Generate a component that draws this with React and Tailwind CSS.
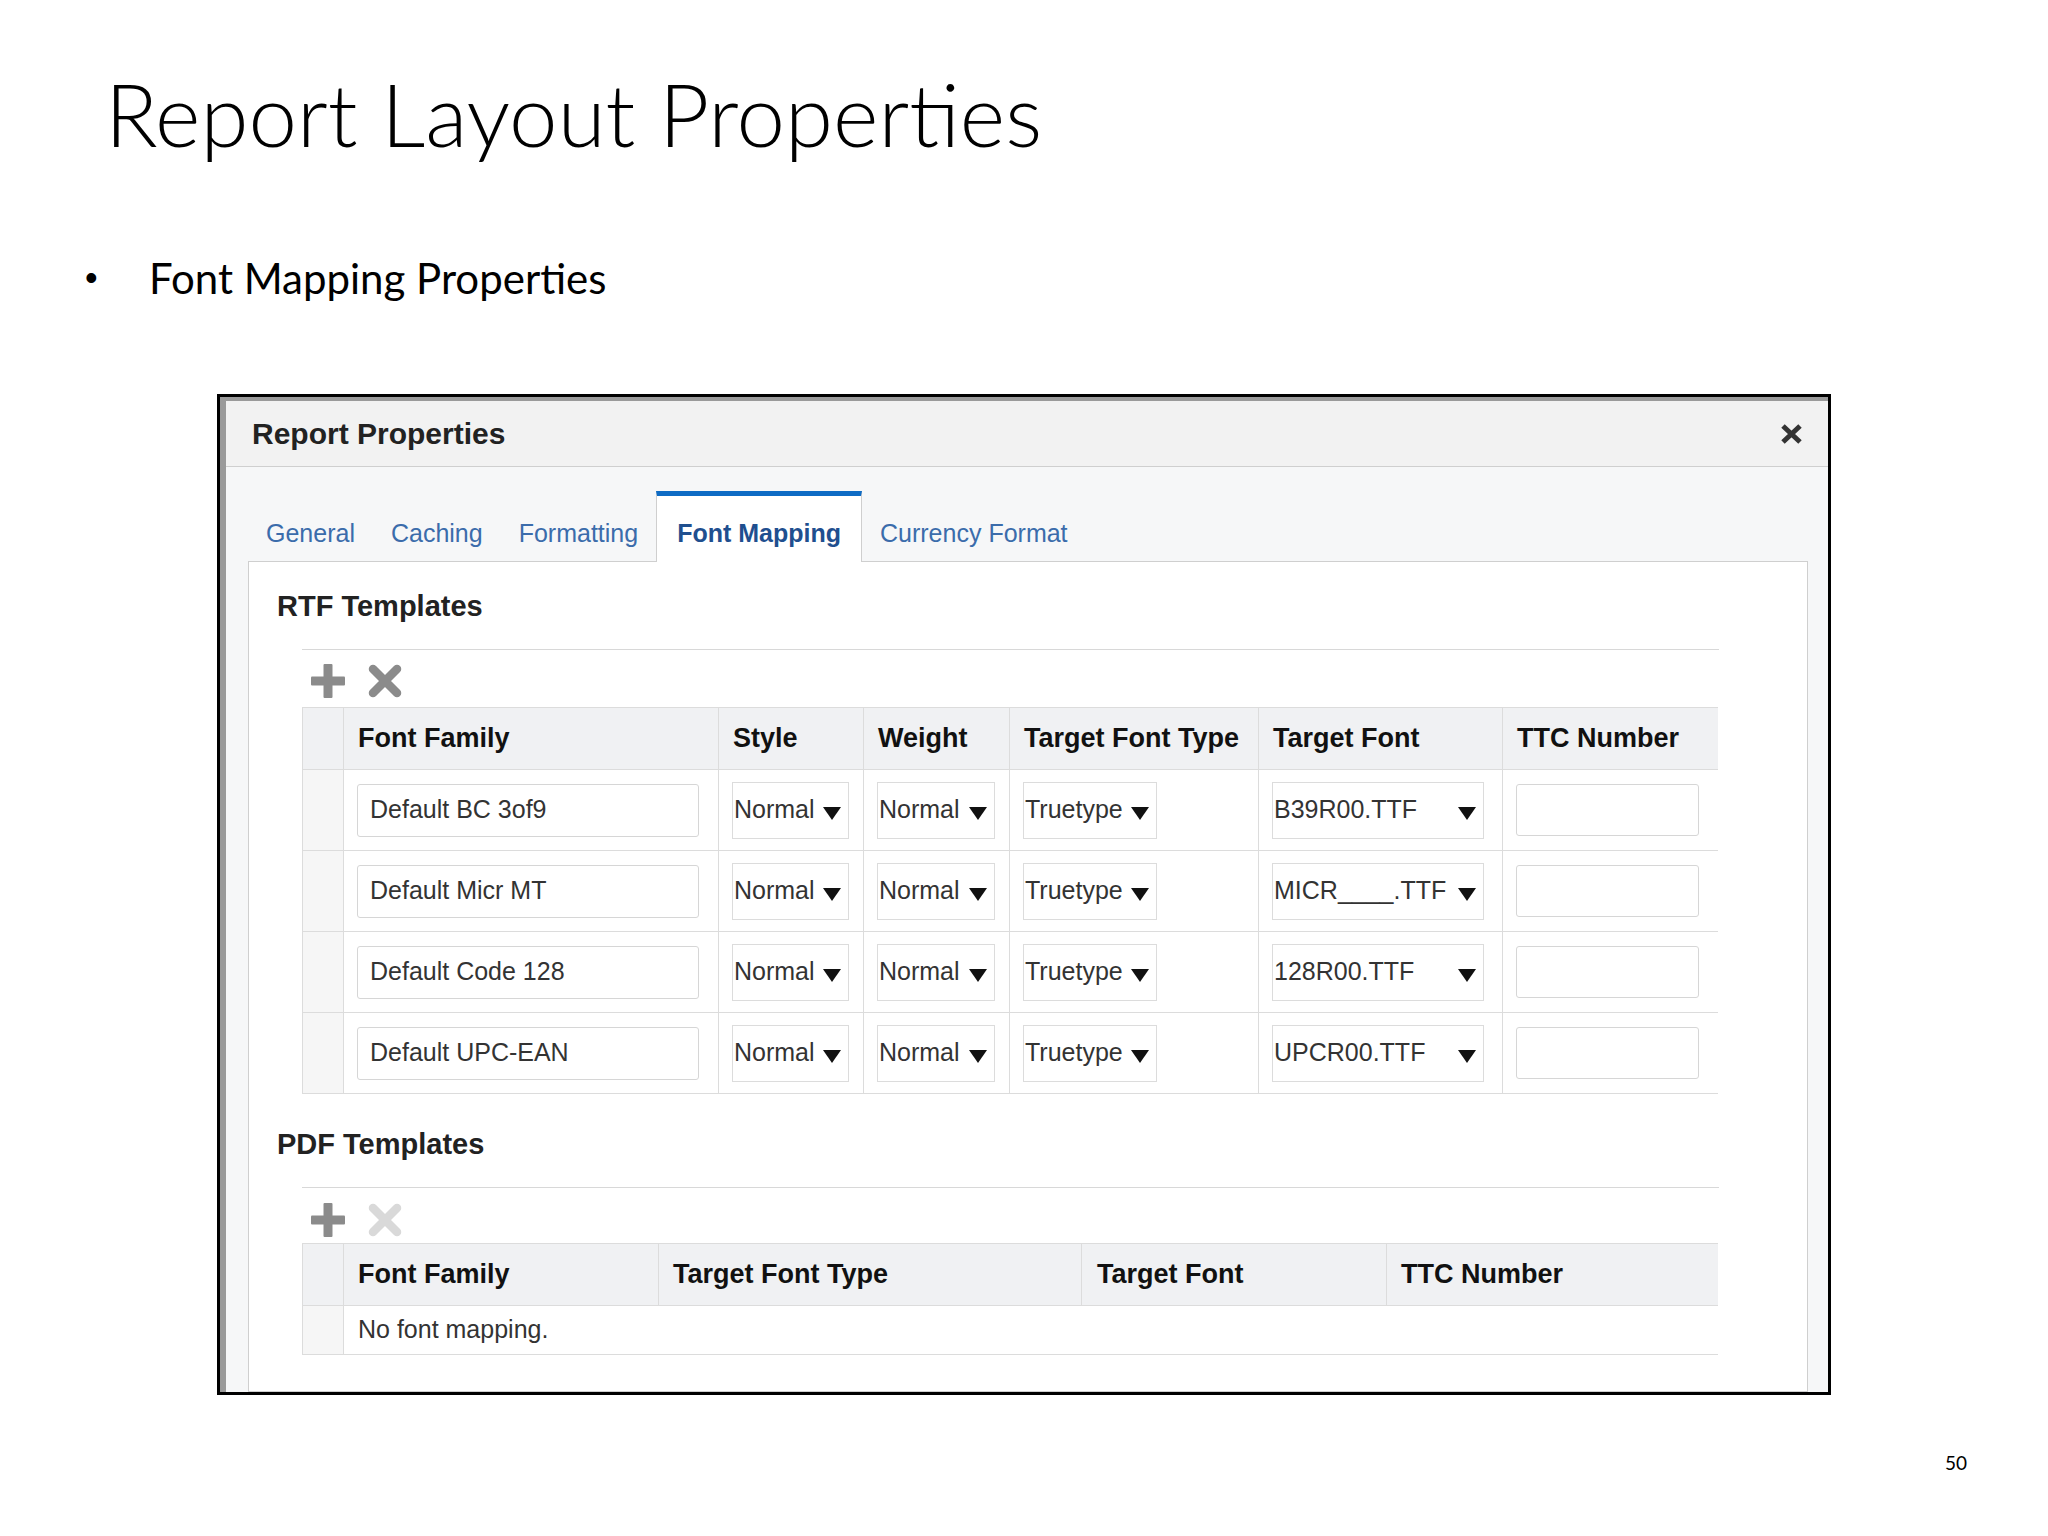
import React from 'react';

const rtfRows = [
  { family: 'Default BC 3of9', font: 'B39R00.TTF' },
  { family: 'Default Micr MT', font: 'MICR____.TTF' },
  { family: 'Default Code 128', font: '128R00.TTF' },
  { family: 'Default UPC-EAN', font: 'UPCR00.TTF' },
];

const Caret = () => (
  <svg width="18" height="13" viewBox="0 0 18 13" className="shrink-0 translate-y-[3px]">
    <path d="M0 0H18L9 13Z" fill="#111" />
  </svg>
);

const PlusIcon = () => (
  <svg width="34" height="34" viewBox="0 0 34 34">
    <rect x="12.5" y="0" width="9" height="34" rx="1" fill="#8b8b8b" />
    <rect x="0" y="12.5" width="34" height="9" rx="1" fill="#8b8b8b" />
  </svg>
);

const CrossIcon = ({ color }) => (
  <svg width="34" height="34" viewBox="0 0 34 34">
    <path d="M5 5L29 29M29 5L5 29" stroke={color} strokeWidth="8.5" strokeLinecap="round" />
  </svg>
);

const Select = ({ value, width }) => (
  <div className={`flex h-[57px] items-center justify-between border border-[#dcdcdc] bg-white pl-[1px] pr-[7px] ${width}`}>
    <span className="whitespace-nowrap">{value}</span>
    <Caret />
  </div>
);

const Tab = ({ label, active }) =>
  active ? (
    <div className="relative -mb-px border-x border-t-[5px] border-x-[#cfcfcf] border-t-[#0e6bc4] bg-white px-[20px] pb-[16px] pt-[25px] text-[25px] font-bold leading-none text-[#1f4f8f]">
      {label}
    </div>
  ) : (
    <div className="border-t-[5px] border-transparent px-[18px] pb-[15px] pt-[25px] text-[25px] leading-none text-[#3b6cab]">
      {label}
    </div>
  );

const headCell = 'flex h-[62px] items-center border-b border-r border-[#dcdcdc] bg-[#f0f1f3] pl-[14px] text-[27px] font-bold text-[#111]';
const rowCell = 'flex h-[81px] items-center border-b border-r border-[#dcdcdc] pl-[13px]';

export default function App() {
  return (
    <div className="relative h-[1536px] w-[2048px] overflow-hidden bg-white font-['Lato',sans-serif] text-black">
      {/* slide title */}
      <div className="pl-[105px] pt-[70px] text-[87px] font-light leading-none">Report Layout Properties</div>

      <div className="mt-[100px] flex items-center pl-[85px] text-[42px] leading-none">
        <span className="w-[64px] font-['Liberation_Sans',sans-serif] text-[36px]">•</span>
        <span>Font Mapping Properties</span>
      </div>

      {/* dialog screenshot */}
      <div className="ml-[217px] mt-[95px] flex h-[1001px] w-[1614px] flex-col overflow-hidden border-[3px] border-black font-['Liberation_Sans',Arial,sans-serif]">
        <div className="flex flex-1 flex-col border-l-[6px] border-t-4 border-[#9a9a9a]">
          <div className="flex h-[66px] shrink-0 items-center justify-between border-b border-[#cfcfcf] bg-[#f2f2f2] pl-[26px] pr-[25px]">
            <span className="text-[30px] font-bold leading-none text-[#222]">Report Properties</span>
            <svg width="23" height="22" viewBox="0 0 23 22">
              <path d="M3 3L20 19M20 3L3 19" stroke="#333" strokeWidth="5" />
            </svg>
          </div>

          <div className="flex flex-1 flex-col bg-[#f6f7f8] pl-[22px] pr-[20px] pt-[24px]">
            <div className="flex items-end">
              <Tab label="General" />
              <Tab label="Caching" />
              <Tab label="Formatting" />
              <Tab label="Font Mapping" active />
              <Tab label="Currency Format" />
            </div>

            <div className="flex-1 border border-[#cfcfcf] bg-white">
              <div className="pl-[28px] pt-[30px] text-[29px] font-bold leading-none text-[#222]">RTF Templates</div>
              <div className="ml-[53px] w-[1417px]">
                <div className="mt-[28px] h-px bg-[#d8d8d8]" />
                <div className="mt-[14px] flex gap-[23px] pl-[9px]">
                  <PlusIcon />
                  <CrossIcon color="#8b8b8b" />
                </div>
                <div className="mt-[9px] grid w-[1416px] grid-cols-[41px_375px_145px_146px_249px_244px_215px] border-l border-t border-[#dcdcdc] text-[25px] text-[#333]">
                  <div className={headCell} />
                  <div className={headCell}>Font Family</div>
                  <div className={headCell}>Style</div>
                  <div className={`${headCell} pl-[10px]`}>Weight</div>
                  <div className={headCell}>Target Font Type</div>
                  <div className={headCell}>Target Font</div>
                  <div className={`${headCell} border-r-0`}>TTC Number</div>
                  {rtfRows.map((row) => (
                    <React.Fragment key={row.family}>
                      <div className={`${rowCell} bg-[#f6f6f6]`} />
                      <div className={rowCell}>
                        <div className="flex h-[53px] w-[342px] items-center rounded-[3px] border border-[#d6d6d6] bg-white pl-[12px]">{row.family}</div>
                      </div>
                      <div className={rowCell}>
                        <Select value="Normal" width="w-[117px]" />
                      </div>
                      <div className={rowCell}>
                        <Select value="Normal" width="w-[118px]" />
                      </div>
                      <div className={rowCell}>
                        <Select value="Truetype" width="w-[134px]" />
                      </div>
                      <div className={rowCell}>
                        <Select value={row.font} width="w-[212px]" />
                      </div>
                      <div className={`${rowCell} border-r-0`}>
                        <div className="h-[52px] w-[183px] rounded-[3px] border border-[#d6d6d6] bg-white" />
                      </div>
                    </React.Fragment>
                  ))}
                </div>
              </div>

              <div className="mt-[36px] pl-[28px] text-[29px] font-bold leading-none text-[#222]">PDF Templates</div>
              <div className="ml-[53px] w-[1417px]">
                <div className="mt-[28px] h-px bg-[#d8d8d8]" />
                <div className="mt-[15px] flex gap-[23px] pl-[9px]">
                  <PlusIcon />
                  <CrossIcon color="#d9d9d9" />
                </div>
                <div className="mt-[6px] grid w-[1416px] grid-cols-[41px_315px_423px_305px_331px] border-l border-t border-[#dcdcdc] text-[25px] text-[#333]">
                  <div className={headCell} />
                  <div className={headCell}>Font Family</div>
                  <div className={headCell}>Target Font Type</div>
                  <div className={`${headCell} pl-[15px]`}>Target Font</div>
                  <div className={`${headCell} border-r-0`}>TTC Number</div>
                  <div className="h-[49px] border-b border-r border-[#dcdcdc] bg-[#f6f6f6]" />
                  <div className="col-span-4 flex h-[49px] items-center border-b border-[#dcdcdc] pl-[14px]">No font mapping.</div>
                </div>
              </div>
            </div>
          </div>
        </div>
      </div>

      <div className="mt-[58px] pl-[1945px] text-[19px] leading-none">50</div>
    </div>
  );
}
